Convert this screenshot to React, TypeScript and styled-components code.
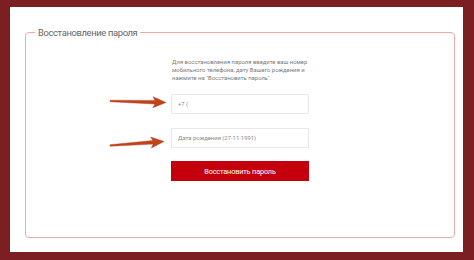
import React from "react";
import styled, { createGlobalStyle } from "styled-components";

const Global = createGlobalStyle`
  html, body { margin: 0; padding: 0; }
  body {
    width: 474px;
    height: 260px;
    background: #7b1f23;
    font-family: Roboto, "Open Sans", sans-serif;
    overflow: hidden;
  }
  #root { height: 100%; }
`;

const Frame = styled.div`
  position: relative;
  box-sizing: border-box;
  height: 260px;
  padding: 7px 11px 8px 10px;
`;

const Panel = styled.div`
  box-sizing: border-box;
  height: 100%;
  background: #ffffff;
  padding: 19px 8px 14px 15px;
  display: flex;
`;

const Box = styled.fieldset`
  flex: 1;
  margin: 0;
  min-width: 0;
  border: 1px solid #eba9ac;
  border-radius: 4px;
  padding: 0;
`;

const Legend = styled.legend`
  margin-left: 9px;
  padding: 0 3px;
  font-family: Roboto, sans-serif;
  font-size: 9.4px;
  letter-spacing: -0.35px;
  line-height: 13px;
  color: #666666;
`;

const Column = styled.div`
  width: 138px;
  margin-left: 145px;
  display: flex;
  flex-direction: column;
  padding-top: 19px;
`;

const Hint = styled.p`
  margin: 0 0 12px 1px;
  font-family: Roboto, sans-serif;
  font-size: 5.9px;
  line-height: 8px;
  color: #7a7a7a;
`;

const Field = styled.input<{ $gap?: number }>`
  box-sizing: border-box;
  width: 138px;
  height: 20px;
  margin: 0 0 ${(p) => p.$gap ?? 0}px 0;
  padding: 0 6px;
  border: 1px solid #e8e8e8;
  background: #fff;
  font-family: Roboto, sans-serif;
  font-size: 5.9px;
  color: #8a8a8a;
  outline: none;
  &::placeholder { color: #8a8a8a; }
`;

const Button = styled.button`
  box-sizing: border-box;
  width: 138px;
  height: 20px;
  border: none;
  background: #c5000d;
  color: #ffffff;
  font-family: Roboto, sans-serif;
  font-size: 7.3px;
  letter-spacing: -0.15px;
  padding: 0;
`;

const Overlay = styled.svg`
  position: absolute;
  left: 0;
  top: 0;
  pointer-events: none;
`;

function Arrow({ x1, y1, x2, y2 }: { x1: number; y1: number; x2: number; y2: number }) {
  const dx = x2 - x1;
  const dy = y2 - y1;
  const len = Math.hypot(dx, dy);
  const ux = dx / len;
  const uy = dy / len;
  const nx = -uy;
  const ny = ux;
  const headLen = 11;
  const hx = x2 - ux * headLen;
  const hy = y2 - uy * headLen;
  const p = (x: number, y: number) => `${x.toFixed(2)},${y.toFixed(2)}`;
  const pts = [
    p(x1 + nx * 0.8, y1 + ny * 0.8),
    p(hx + nx * 1.8, hy + ny * 1.8),
    p(hx - ux * 2 + nx * 5.5, hy - uy * 2 + ny * 5.5),
    p(x2, y2),
    p(hx - ux * 2 - nx * 5.5, hy - uy * 2 - ny * 5.5),
    p(hx - nx * 1.8, hy - ny * 1.8),
    p(x1 - nx * 0.8, y1 - ny * 0.8),
  ].join(" ");
  return <polygon points={pts} fill="#c2421b" stroke="#a8341a" strokeWidth="0.4" strokeLinejoin="round" />;
}

export default function App() {
  return (
    <>
      <Global />
      <Frame>
        <Panel>
          <Box>
            <Legend>Восстановление пароля</Legend>
            <Column>
              <Hint>
                Для восстановления пароля введите ваш номер мобильного телефона, дату Вашего рождения и
                нажмите на "Восстановить пароль".
              </Hint>
              <Field $gap={14} placeholder="+7 (" readOnly />
              <Field $gap={13} placeholder="Дата рождения (27-11-1991)" readOnly />
              <Button>Восстановить пароль</Button>
            </Column>
          </Box>
        </Panel>
        <Overlay width="474" height="260" viewBox="0 0 474 260">
          <Arrow x1={110} y1={101} x2={166} y2={102.5} />
          <Arrow x1={110} y1={145.5} x2={164} y2={141.5} />
        </Overlay>
      </Frame>
    </>
  );
}
